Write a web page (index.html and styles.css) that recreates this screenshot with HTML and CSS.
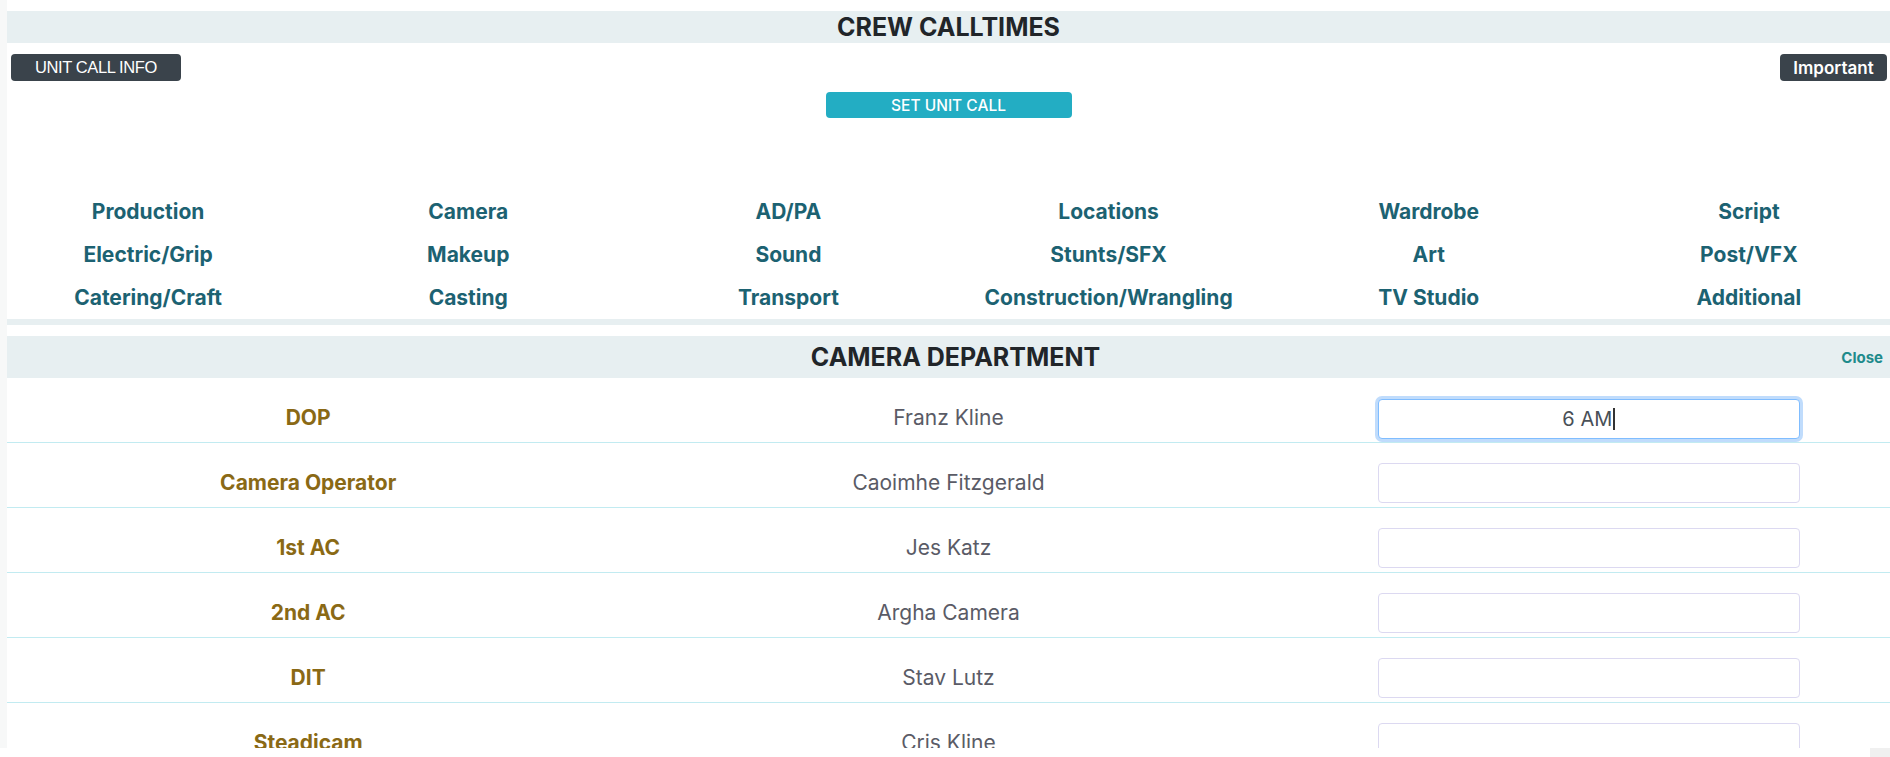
FILE: index.html
```html
<!DOCTYPE html>
<html lang="en">
<head>
<meta charset="utf-8">
<title>Crew Calltimes</title>
<link rel="stylesheet" href="styles.css">
</head>
<body>
<div class="app">
  <div class="side"></div>
  <main class="content">
    <div class="page-title">CREW CALLTIMES</div>
    <div class="toolbar">
      <button class="btn btn-dark btn-upper">UNIT CALL INFO</button>
      <button class="btn btn-dark btn-important">Important</button>
    </div>
    <div class="set-row">
      <button class="btn btn-info">SET UNIT CALL</button>
    </div>

    <div class="dept-section">
      <div class="dept-grid">
        <a class="dept">Production</a>
        <a class="dept">Camera</a>
        <a class="dept">AD/PA</a>
        <a class="dept">Locations</a>
        <a class="dept">Wardrobe</a>
        <a class="dept">Script</a>
        <a class="dept">Electric/Grip</a>
        <a class="dept">Makeup</a>
        <a class="dept">Sound</a>
        <a class="dept">Stunts/SFX</a>
        <a class="dept">Art</a>
        <a class="dept">Post/VFX</a>
        <a class="dept">Catering/Craft</a>
        <a class="dept">Casting</a>
        <a class="dept">Transport</a>
        <a class="dept">Construction/Wrangling</a>
        <a class="dept">TV Studio</a>
        <a class="dept">Additional</a>
      </div>
    </div>

    <div class="dept-header">
      <div class="dept-title">CAMERA DEPARTMENT</div>
      <a class="close">Close</a>
    </div>

    <div class="crew-list">
      <div class="crew-row">
        <div class="crew-grid">
          <div class="role">DOP</div>
          <div class="name">Franz Kline</div>
          <div class="time-cell"><div class="time-input focused" role="textbox">6 AM<span class="caret"></span></div></div>
        </div>
      </div>
      <div class="crew-row">
        <div class="crew-grid">
          <div class="role">Camera Operator</div>
          <div class="name">Caoimhe Fitzgerald</div>
          <div class="time-cell"><input class="time-input" type="text"></div>
        </div>
      </div>
      <div class="crew-row">
        <div class="crew-grid">
          <div class="role">1st AC</div>
          <div class="name">Jes Katz</div>
          <div class="time-cell"><input class="time-input" type="text"></div>
        </div>
      </div>
      <div class="crew-row">
        <div class="crew-grid">
          <div class="role">2nd AC</div>
          <div class="name">Argha Camera</div>
          <div class="time-cell"><input class="time-input" type="text"></div>
        </div>
      </div>
      <div class="crew-row">
        <div class="crew-grid">
          <div class="role">DIT</div>
          <div class="name">Stav Lutz</div>
          <div class="time-cell"><input class="time-input" type="text"></div>
        </div>
      </div>
      <div class="crew-row">
        <div class="crew-grid">
          <div class="role">Steadicam</div>
          <div class="name">Cris Kline</div>
          <div class="time-cell"><input class="time-input" type="text"></div>
        </div>
      </div>
    </div>
  </main>
</div>
<div class="bottom-bar"><div class="corner"></div></div>
</body>
</html>
```

FILE: styles.css
```css
* { box-sizing: border-box; }

html, body {
  margin: 0;
  padding: 0;
  background: #ffffff;
  font-family: Inter, "Noto Sans", "Liberation Sans", sans-serif;
  color: #212529;
  overflow: hidden;
}

.app {
  display: flex;
  height: 748px;
}

.side {
  width: 7px;
  flex: none;
  background: #f7f8f8;
}

.content {
  flex: 1;
  min-width: 0;
  overflow: hidden;
}

.page-title {
  margin-top: 11px;
  height: 32px;
  background: #e7eff1;
  text-align: center;
  font-size: 25px;
  font-weight: 700;
  line-height: 32px;
  color: #212529;
}

.toolbar {
  display: flex;
  justify-content: space-between;
  padding: 0 3px 0 4px;
  margin-top: 11px;
}

.btn {
  border: none;
  border-radius: 4px;
  font-family: inherit;
  color: #ffffff;
  cursor: pointer;
  padding: 0;
}

.btn-dark {
  background: #3a434b;
  height: 27px;
  font-size: 17px;
  font-weight: 600;
}

.btn-upper {
  width: 170px;
  font-family: "Liberation Sans", Arial, sans-serif;
  font-weight: 400;
  font-size: 16.5px;
  letter-spacing: -0.4px;
}

.btn-important {
  width: 107px;
}

.set-row {
  display: flex;
  justify-content: center;
  margin-top: 11px;
}

.btn-info {
  background: #23adc3;
  width: 246px;
  height: 26px;
  font-size: 15.5px;
  font-weight: 500;
}

.dept-section {
  margin-top: 72px;
  border-bottom: 6px solid #e7eff1;
}

.dept-grid {
  display: grid;
  grid-template-columns: repeat(6, 1fr);
  margin: 0 -19px;
}

.dept {
  height: 43px;
  line-height: 43px;
  text-align: center;
  font-size: 21px;
  font-weight: 700;
  color: #1c6272;
  cursor: pointer;
}

.dept-header {
  margin-top: 11px;
  height: 42px;
  background: #e7eff1;
  display: grid;
  grid-template-columns: 1fr auto 1fr;
  align-items: center;
}

.dept-title {
  grid-column: 2;
  padding-left: 14px;
  font-size: 25px;
  font-weight: 700;
  color: #212529;
}

.close {
  grid-column: 3;
  justify-self: end;
  padding-right: 7px;
  font-size: 15px;
  font-weight: 700;
  color: #1f8b8c;
  cursor: pointer;
}

.crew-row {
  height: 65px;
  border-bottom: 1px solid #c2ebf1;
}

.crew-grid {
  display: grid;
  grid-template-columns: repeat(3, 1fr);
  margin: 0 -19px;
  height: 64px;
  padding-top: 20px;
  align-items: start;
}

.role,
.name {
  height: 40px;
  line-height: 40px;
  text-align: center;
  font-size: 21px;
  white-space: nowrap;
}

.role {
  font-weight: 700;
  color: #8a6915;
}

.name {
  color: #5a5b66;
}

.time-cell {
  display: flex;
  justify-content: center;
}

.time-input {
  width: 422px;
  height: 40px;
  border: 1px solid #dcd9f1;
  border-radius: 4px;
  background: #ffffff;
  font-family: inherit;
  font-size: 20px;
  color: #495057;
  text-align: center;
  outline: none;
}

.time-input.focused {
  display: flex;
  align-items: center;
  justify-content: center;
  border-color: #80bdff;
  box-shadow: 0 0 0 3px #c0dcfc;
  margin-top: 1px;
}

.caret {
  display: inline-block;
  width: 2px;
  height: 22px;
  margin-left: 1px;
  background: #333333;
}

.bottom-bar {
  height: 9px;
  display: flex;
  justify-content: flex-end;
}

.corner {
  width: 20px;
  background: #f0f0f0;
}
```
